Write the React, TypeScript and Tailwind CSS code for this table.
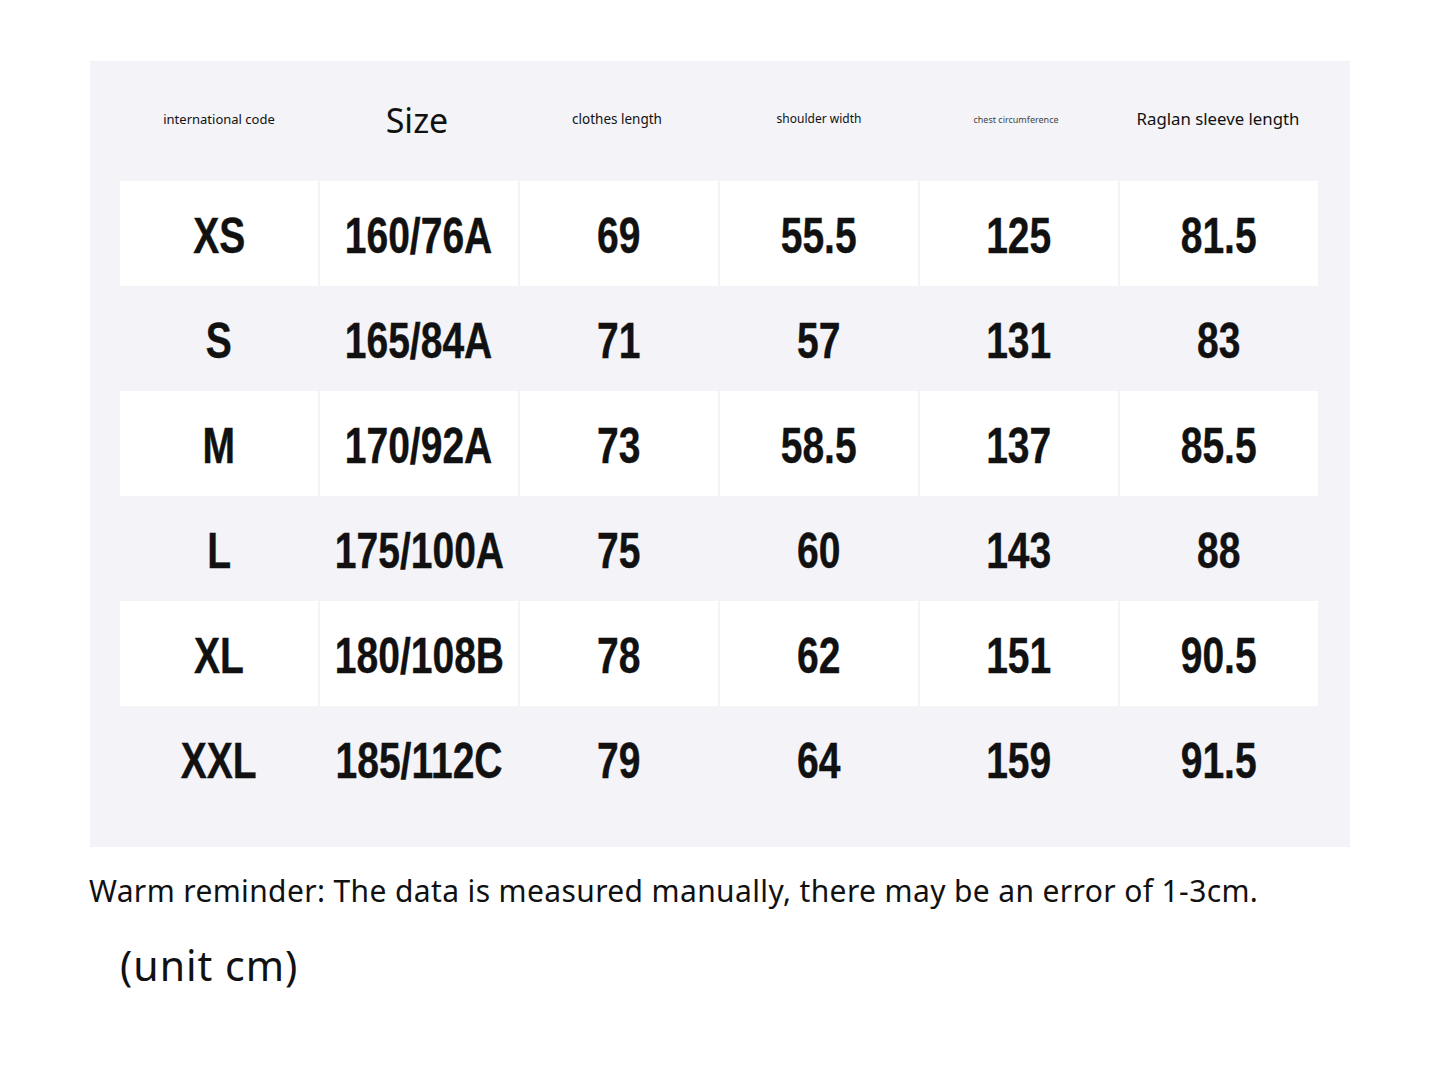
import React from "react";

const rows = [
  ["XS", "160/76A", "69", "55.5", "125", "81.5"],
  ["S", "165/84A", "71", "57", "131", "83"],
  ["M", "170/92A", "73", "58.5", "137", "85.5"],
  ["L", "175/100A", "75", "60", "143", "88"],
  ["XL", "180/108B", "78", "62", "151", "90.5"],
  ["XXL", "185/112C", "79", "64", "159", "91.5"],
];

export default function App() {
  return (
    <div className="w-[1440px] h-[1080px] bg-white text-[#111] pt-[61px] pl-[90px]" style={{ fontFamily: "'Noto Sans', Roboto, sans-serif" }}>
      <div className="w-[1260px] bg-[#f3f3f8] pl-[30px] pr-[32px] pb-[36px]">
        <div className="grid grid-cols-6 gap-x-[2px] h-[120px] items-center text-center">
          <div className="text-[13px] pb-[2px]">international code</div>
          <div className="text-[34px] pb-[2px] pr-[4px]">Size</div>
          <div className="text-[13.5px] pb-[4px] pr-[4px]">clothes length</div>
          <div className="text-[12px] pb-[4px]">shoulder width</div>
          <div className="text-[9px] text-[#444] pb-[2px] pr-[6px]">chest circumference</div>
          <div className="text-[16.8px] pb-[4px] pr-[2px]">Raglan sleeve length</div>
        </div>
        {rows.map((r, i) => (
          <div key={i} className="grid grid-cols-6 gap-x-[2px] h-[105px]">
            {r.map((c, j) => (
              <div
                key={j}
                className={`flex items-center justify-center pt-[5px] ${i % 2 === 0 ? "bg-white" : ""}`}
              >
                <span
                  className="inline-block font-bold text-[50px] leading-none scale-x-78 [-webkit-text-stroke:0.4px_#111]"
                  style={{ fontFamily: "'Liberation Sans', Arial, sans-serif" }}
                >
                  {c}
                </span>
              </div>
            ))}
          </div>
        ))}
      </div>
      <div className="mt-[26px] ml-[-1px] text-[30px] leading-[36px] tracking-[0.37px]">
        Warm reminder: The data is measured manually, there may be an error of 1-3cm.
      </div>
      <div className="mt-[32px] ml-[30px] text-[41px] leading-[48px] tracking-[1px]">(unit cm)</div>
    </div>
  );
}
